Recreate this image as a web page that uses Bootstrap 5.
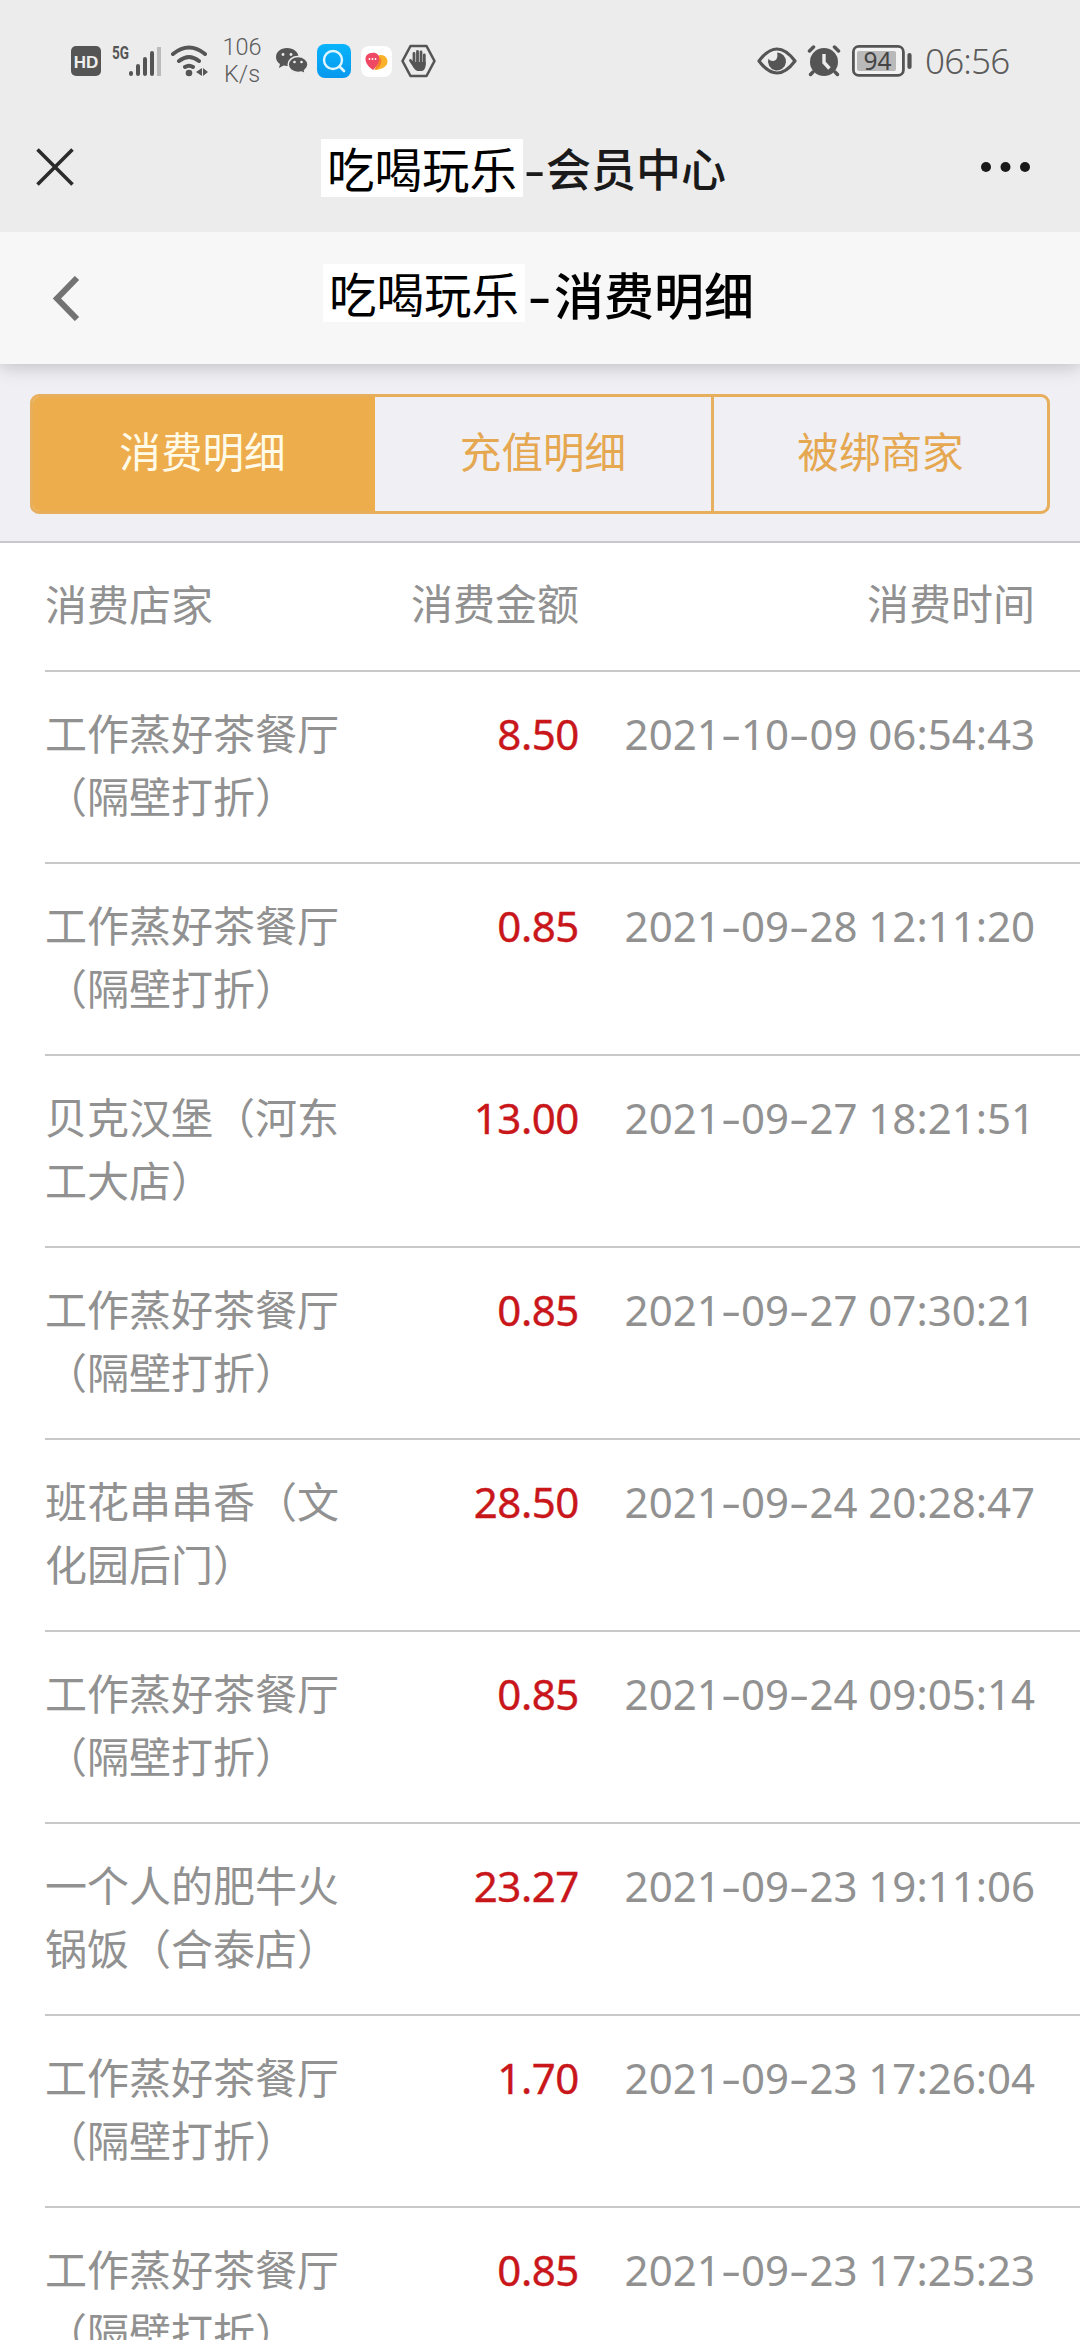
<!DOCTYPE html>
<html lang="zh-CN">
<head>
<meta charset="utf-8">
<meta name="viewport" content="width=device-width, initial-scale=1">
<title>会员中心</title>
<link href="https://cdn.jsdelivr.net/npm/bootstrap@5.3.0/dist/css/bootstrap.min.css" rel="stylesheet">
<style>
body{font-family:"Noto Sans","Noto Sans CJK SC",sans-serif;background:#fff;color:#919191;height:2340px;overflow:hidden}
svg{display:block;flex:none}
.statusbar{height:120px;background:#ececec;color:#5c5c5c;padding:2px 71px 0 71px}
.net-speed{font:300 23.5px/27px Roboto,sans-serif;text-align:center;width:44px}
.clock-text{font:300 35px/40px "Noto Sans",sans-serif;color:#5c5c5c;letter-spacing:-.8px;width:84px;margin-left:13px}
.wx-head{height:112px;background:#ececec;padding:0 50px 18px 36px;z-index:2}
.page-head{height:132px;background:#f7f7f7;box-shadow:0 2px 18px rgba(0,0,0,.22);padding:0 54px 0 53px;z-index:1}
.titles{font-family:"Noto Sans CJK SC",sans-serif;font-weight:500;white-space:nowrap}
.brand{background:#fff;color:#000;font-weight:400;font-size:47.5px;line-height:57px;height:58px;width:202px;padding-left:6px}
.hyph{width:23px;text-align:center;transform:scaleX(1.35)}
.t1{font-size:45px;color:#1a1a1a;line-height:58px;margin:2px auto 0 247px}
.t2{font-size:50px;color:#000;line-height:58px;margin:0 auto 10px 243px}
.t2 .hyph{width:29px}
.tabwrap{background:#efeff4;height:179px;padding:30px 30px 0;border-bottom:2px solid #c8c7cc}
.tabs-seg{height:120px;border:3px solid #e7ae5c;border-radius:9px;overflow:hidden}
.tabs-seg .btn{font:400 41.6px/1 "Noto Sans CJK SC",sans-serif;color:#e5a74f;border:0;border-radius:0;flex:none;padding:0 0 6px}
.tabs-seg .btn.active{background:#eead4d;color:#fffbe8;width:342px;padding-right:3px}
.tabs-seg .mid{width:339px;border-right:3px solid #e5b05f}
.tabs-seg .last{width:333px}
.records{margin-left:45px;font-size:42px;line-height:63px}
.entry{border-bottom:2px solid #c8c8c8;padding:30px 45px 34px 0;height:192px}
.entry.heading{height:129px;padding-top:29px}
.shop{width:300px;font-family:"Noto Sans CJK SC",sans-serif;margin-top:-2.5px}
.heading .shop{margin-top:-1px}
.amt{width:234px;text-align:right;color:#c8161b;letter-spacing:-.4px;-webkit-text-stroke:.4px #c8161b}
.heading .amt{color:inherit;letter-spacing:0;-webkit-text-stroke:0}
.when{flex:1;text-align:right;white-space:nowrap}
.when i{font-style:normal;display:inline-block;width:20.3px;text-align:center;transform:scaleX(1.5)}
</style>
</head>
<body>
<div class="statusbar d-flex align-items-center justify-content-between">
  <div class="d-flex align-items-center">
    <svg width="30" height="30" viewBox="0 0 30 30"><rect width="30" height="30" rx="5" fill="#555"/><text x="15" y="21.500" font-family="Liberation Sans" font-weight="700" font-size="17" text-anchor="middle" fill="#eee">HD</text></svg>
    <svg class="ms-2" width="56" height="34" viewBox="109 44 56 34"><text x="112" y="59" font-family="Roboto" font-weight="700" font-size="18.500" textLength="17" lengthAdjust="spacingAndGlyphs" fill="#555">5G</text><g stroke="#555" stroke-width="4" stroke-linecap="round"><path d="M131 73v1M138 66v8M145 59v15M152 53v21"/></g><path d="M159 47v29" stroke="#bbb" stroke-width="4"/></svg>
    <svg style="margin-left:5px" width="40" height="34" viewBox="170 44 40 34"><g fill="none" stroke="#555" stroke-width="4" stroke-linecap="round"><path d="M173 54Q189 41 205 54M179 61Q189 53 199 61M185 67Q189 64.500 193 67"/></g><circle cx="189" cy="73" r="3.300" fill="#555"/><path d="M196 72l6-4v8zM208 72l-5-4v8z" fill="#555"/></svg>
    <div class="net-speed" style="margin-left:10px">106<br>K/s</div>
    <svg style="margin-left:11px" width="34" height="30" viewBox="275 46 34 30"><path d="M287 48c-6.500 0-11 4.200-11 9 0 3 1.500 5.500 4 7l-1 4 4.500-2.500 4 .5c6 0 11-4 11-9s-5-9-11.500-9z" fill="#555"/><path d="M298 56.500c-5.500 0-9.800 3.500-9.800 8s4.300 8 9.800 8l3.500-.5 4 2-1-3.500c2-1.500 3.500-3.500 3.500-6 0-4.500-4.500-8-10-8z" fill="#555" stroke="#ececec" stroke-width="1.500"/><g fill="#eee"><circle cx="283" cy="54.500" r="1.400"/><circle cx="291" cy="54.500" r="1.400"/><circle cx="294.500" cy="62" r="1.300"/><circle cx="301.500" cy="62" r="1.300"/></g></svg>
    <svg style="margin-left:8px" width="34" height="34" viewBox="0 0 34 34"><defs><linearGradient id="sky" x2="0" y2="1"><stop stop-color="#08b4fb"/><stop offset="1" stop-color="#0898ee"/></linearGradient></defs><rect width="34" height="34" rx="8" fill="url(#sky)"/><circle cx="16" cy="16" r="9" fill="none" stroke="#dff6ff" stroke-width="2.400"/><path d="M22.500 22.500l4.500 4.500" stroke="#dff6ff" stroke-width="2.600" stroke-linecap="round"/></svg>
    <svg style="margin-left:10px" width="31" height="31" viewBox="0 0 31 31"><rect width="31" height="31" rx="8" fill="#fff"/><path d="M20 9c4 0 6.500 3 6.500 6.500 0 4.500-5 8-12 8.500 0-4-1-15 5.500-15z" fill="#fbb22b"/><path d="M11 7c4-1 7.500 2 7.500 6 0 3.700-3 7.500-6.500 11-4-3-7.500-6.500-7.500-11C4.500 9.500 7 7 11 7z" fill="#ee4864"/><path d="M18.500 11c0 5-2 9.500-5.500 13 4.500-1 7.500-6 7.500-10z" fill="#f47b2b"/><g fill="#fff"><circle cx="8.500" cy="13" r=".9"/><circle cx="11.500" cy="13" r=".9"/><circle cx="14.500" cy="13" r=".9"/></g></svg>
    <svg style="margin-left:9px" width="35" height="34" viewBox="0 0 35 34"><path d="M9.500 2h16l8 15-8 15h-16l-8-15z" fill="none" stroke="#555" stroke-width="2.600" stroke-linejoin="round"/><g stroke="#555" stroke-linecap="round" stroke-width="2.800"><path d="M13 9.500V20M16.500 7.500V20M20 8V20M23.300 11V20M9.500 16.500l4 6"/></g><path d="M11.700 18h13v3c0 3-2 6-4 6h-4c-2 0-5-4-5-6z" fill="#555"/></svg>
  </div>
  <div class="d-flex align-items-center">
    <svg width="40" height="28" viewBox="0 0 40 28"><path d="M2 14Q11 2 20 2T38 14Q29 26 20 26T2 14z" fill="none" stroke="#555" stroke-width="3.200" stroke-linejoin="round"/><path d="M20 5.500a9 9 0 1 1-8.500 6c1 3 6 3.500 8 .5 1.300-2.300 1-4.500.5-6.500z" fill="#555"/></svg>
    <svg style="margin-left:10px" width="34" height="32" viewBox="0 0 34 32"><circle cx="17" cy="17" r="14" fill="#555"/><path d="M2 6.500l5-4.500M32 6.500L27 2" stroke="#ececec" stroke-width="7"/><path d="M2.500 6l4-4M31.500 6l-4-4" stroke="#555" stroke-width="3.500" stroke-linecap="round"/><path d="M6 27l-2.500 2.500M28 27l2.500 2.500" stroke="#555" stroke-width="3.500" stroke-linecap="round"/><path d="M17 9v8.500l5.500 6" fill="none" stroke="#ececec" stroke-width="3.400"/></svg>
    <svg style="margin-left:11px" width="60" height="32" viewBox="0 0 60 32"><rect x="1.400" y="1.400" width="50" height="29" rx="5.500" fill="#f3f3f3" stroke="#555" stroke-width="2.800"/><rect x="5" y="6" width="39" height="20" rx="2" fill="#b9b9b9"/><path d="M57.500 10v12" stroke="#555" stroke-width="4.200" stroke-linecap="round"/><text x="25.500" y="25" text-anchor="middle" font-family="Noto Sans" font-size="24.500" fill="#444">94</text></svg>
    <div class="clock-text">06:56</div>
  </div>
</div>

<header class="wx-head d-flex align-items-center position-relative">
  <svg width="38" height="38" viewBox="0 0 38 38"><path d="M1.500 1.500l35 35M36.500 1.500l-35 35" stroke="#2b2b2b" stroke-width="3.600"/></svg>
  <div class="titles t1 d-flex"><span class="brand">吃喝玩乐</span><span class="hyph">-</span><span>会员中心</span></div>
  <svg width="49" height="10" viewBox="0 0 49 10"><g fill="#1a1a1a"><circle cx="5" cy="5" r="5"/><circle cx="24.500" cy="5" r="5"/><circle cx="44" cy="5" r="5"/></g></svg>
</header>
<header class="page-head d-flex align-items-center position-relative">
  <svg width="27" height="45" viewBox="0 0 27 45"><path d="M24 2L4 22.500 24 43" fill="none" stroke="#737373" stroke-width="6"/></svg>
  <div class="titles t2 d-flex"><span class="brand">吃喝玩乐</span><span class="hyph">-</span><span>消费明细</span></div>
</header>

<div class="tabwrap">
  <div class="tabs-seg d-flex" role="group">
    <button class="btn active">消费明细</button>
    <button class="btn mid">充值明细</button>
    <button class="btn last">被绑商家</button>
  </div>
</div>

<main class="records">
  <div class="entry heading d-flex"><div class="shop">消费店家</div><div class="amt">消费金额</div><div class="when">消费时间</div></div>
  <div class="entry d-flex"><div class="shop">工作蒸好茶餐厅（隔壁打折）</div><div class="amt">8.50</div><div class="when">2021<i>-</i>10<i>-</i>09 06:54:43</div></div>
  <div class="entry d-flex"><div class="shop">工作蒸好茶餐厅（隔壁打折）</div><div class="amt">0.85</div><div class="when">2021<i>-</i>09<i>-</i>28 12:11:20</div></div>
  <div class="entry d-flex"><div class="shop">贝克汉堡（河东工大店）</div><div class="amt">13.00</div><div class="when">2021<i>-</i>09<i>-</i>27 18:21:51</div></div>
  <div class="entry d-flex"><div class="shop">工作蒸好茶餐厅（隔壁打折）</div><div class="amt">0.85</div><div class="when">2021<i>-</i>09<i>-</i>27 07:30:21</div></div>
  <div class="entry d-flex"><div class="shop">班花串串香（文化园后门）</div><div class="amt">28.50</div><div class="when">2021<i>-</i>09<i>-</i>24 20:28:47</div></div>
  <div class="entry d-flex"><div class="shop">工作蒸好茶餐厅（隔壁打折）</div><div class="amt">0.85</div><div class="when">2021<i>-</i>09<i>-</i>24 09:05:14</div></div>
  <div class="entry d-flex"><div class="shop">一个人的肥牛火锅饭（合泰店）</div><div class="amt">23.27</div><div class="when">2021<i>-</i>09<i>-</i>23 19:11:06</div></div>
  <div class="entry d-flex"><div class="shop">工作蒸好茶餐厅（隔壁打折）</div><div class="amt">1.70</div><div class="when">2021<i>-</i>09<i>-</i>23 17:26:04</div></div>
  <div class="entry d-flex"><div class="shop">工作蒸好茶餐厅（隔壁打折）</div><div class="amt">0.85</div><div class="when">2021<i>-</i>09<i>-</i>23 17:25:23</div></div>
</main>
<script src="https://cdn.jsdelivr.net/npm/bootstrap@5.3.0/dist/js/bootstrap.bundle.min.js"></script>
</body>
</html>
